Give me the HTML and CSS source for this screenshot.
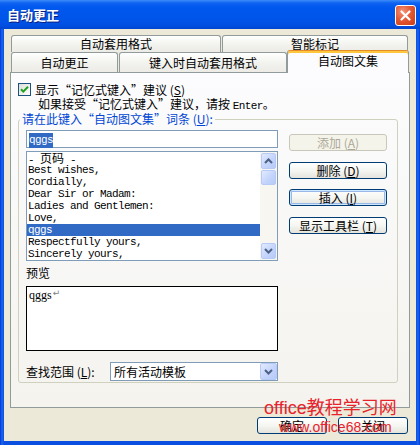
FILE: index.html
```html
<!DOCTYPE html>
<html lang="zh-CN">
<head>
<meta charset="utf-8">
<title>自动更正</title>
<link rel="stylesheet" href="styles.css">
</head>
<body>
<div class="window">
  <div class="titlebar">
    <span class="title">自动更正</span>
    <span class="close"><svg width="13" height="13" viewBox="0 0 13 13"><path d="M2.5 2.5L10.5 10.5M10.5 2.5L2.5 10.5" stroke="#fff" stroke-width="2.2" stroke-linecap="round"/></svg></span>
  </div>
  <div class="client">
    <div class="tabrow back">
      <div class="tab t1">自动套用格式</div>
      <div class="tab t2">智能标记</div>
    </div>
    <div class="tabrow front">
      <div class="tab t3">自动更正</div>
      <div class="tab t4">键入时自动套用格式</div>
      <div class="tab t5 active">自动图文集</div>
    </div>
    <div class="panel">
      <div class="check-row">
        <span class="checkbox"><svg width="11" height="11" viewBox="0 0 11 11"><path d="M2 5.2L4.3 7.6L9 2.8" fill="none" stroke="#21A121" stroke-width="2"/></svg></span>
        <span>显示<span class="ql">“</span>记忆式键入<span class="qr">”</span>建议 (<u>S</u>)</span>
      </div>
      <div class="hint">如果接受<span class="ql">“</span>记忆式键入<span class="qr">”</span>建议，请按 <span class="mono">Enter</span>。</div>
      <fieldset class="group">
        <legend>请在此键入<span class="ql">“</span>自动图文集<span class="qr">”</span>词条 (<u>U</u>):</legend>
        <div class="group-body">
          <div class="left">
            <div class="entry"><span class="sel">qggs</span></div>
            <div class="listbox">
              <ul class="items">
                <li>- <span class="cjk">页码</span> -</li>
                <li>Best wishes,</li>
                <li>Cordially,</li>
                <li>Dear Sir or Madam:</li>
                <li>Ladies and Gentlemen:</li>
                <li>Love,</li>
                <li class="selected">qggs</li>
                <li>Respectfully yours,</li>
                <li>Sincerely yours,</li>
              </ul>
              <div class="scrollbar">
                <div class="sb-btn"><svg width="9" height="6" viewBox="0 0 9 6"><path d="M1 5L4.5 1.5L8 5" fill="none" stroke="#4D6185" stroke-width="2"/></svg></div>
                <div class="sb-thumb"></div>
                <div class="sb-track"></div>
                <div class="sb-btn"><svg width="9" height="6" viewBox="0 0 9 6"><path d="M1 1L4.5 4.5L8 1" fill="none" stroke="#4D6185" stroke-width="2"/></svg></div>
              </div>
            </div>
            <div class="label">预览</div>
            <div class="preview">qggs<span class="para">↵</span></div>
            <div class="combo-row">
              <span class="combo-label">查找范围 (<u>L</u>):</span>
              <div class="combo">
                <span>所有活动模板</span>
                <span class="combo-btn"><svg width="9" height="6" viewBox="0 0 9 6"><path d="M1 1L4.5 4.5L8 1" fill="none" stroke="#4D6185" stroke-width="2"/></svg></span>
              </div>
            </div>
          </div>
          <div class="right">
            <div class="btn disabled b1">添加 (<u>A</u>)</div>
            <div class="btn b2">删除 (<u>D</u>)</div>
            <div class="btn focus b3">插入 (<u>I</u>)</div>
            <div class="btn b4">显示工具栏 (<u>T</u>)</div>
          </div>
        </div>
      </fieldset>
    </div>
    <div class="footer">
      <div class="btn fbtn">确定</div>
      <div class="btn fbtn">关闭</div>
    </div>
    <div class="watermark">
      <div class="wm1">office教程学习网</div>
      <div class="wm2">www.office68.com</div>
    </div>
  </div>
</div>
</body>
</html>
```

FILE: styles.css
```css
* { box-sizing: border-box; margin: 0; padding: 0; }
html, body { width: 420px; height: 445px; overflow: hidden; }
body {
  font-family: "Noto Sans CJK SC", "Liberation Sans", sans-serif;
  font-size: 12px;
  line-height: 12px;
  color: #000;
  background: #fff;
}
u { text-decoration: underline; text-underline-offset: 1px; }
.ql, .qr { display: inline-block; width: 12px; }
.ql { text-align: right; }
.qr { text-align: left; }

.window {
  width: 420px;
  height: 445px;
  display: flex;
  flex-direction: column;
  background: linear-gradient(90deg, #0831D9 0, #166AEE 2px, #0A4FE0 4px, #0A4FE0 416px, #166AEE 418px, #0831D9 420px);
}

.titlebar {
  height: 29px;
  flex: none;
  display: flex;
  align-items: center;
  justify-content: space-between;
  padding: 1px 4px 0 7px;
  background: linear-gradient(#3D8BF7 0, #0F63F2 3px, #0058EE 7px, #0055EA 18px, #0050E2 25px, #0045D0 29px);
}
.title {
  color: #fff;
  font-weight: bold;
  font-size: 13px;
  line-height: 14px;
  text-shadow: 1px 1px 0 #0A1E80;
}
.close {
  width: 21px;
  height: 21px;
  border: 1px solid #fff;
  border-radius: 3px;
  display: flex;
  align-items: center;
  justify-content: center;
  background: radial-gradient(circle at 35% 30%, #F3957A 0, #E35A36 45%, #C93A14 100%);
}

.client {
  flex: 1;
  margin: 0 4px 4px;
  background: #ECE9D8;
  padding: 6px 6px 0 6px;
  display: flex;
  flex-direction: column;
  position: relative;
}

.tabrow { display: flex; padding-left: 1px; }
.tabrow.back { height: 17px; }
.tabrow.front { height: 20px; align-items: flex-end; }
.tab {
  border: 1px solid #919B9C;
  border-bottom: none;
  border-radius: 3px 3px 0 0;
  background: linear-gradient(#FFFFFF, #F3F3EF 50%, #ECEBE6);
  text-align: center;
}
.back .tab { height: 17px; line-height: 16px; }
.front .tab { height: 20px; line-height: 19px; }
.t1 { width: 210px; }
.t2 { width: 186px; margin-left: 1px; }
.t3 { width: 107px; }
.t4 { width: 168px; margin-left: 1px; }
.tab.active {
  width: 122px;
  height: 23px;
  line-height: 20px;
  margin-bottom: -1px;
  background: #FCFCFE;
  border-top: 1px solid #E68B2C;
  box-shadow: inset 0 2px 0 #FFC73C;
  position: relative;
  z-index: 2;
}

.panel {
  width: 400px;
  height: 336px;
  flex: none;
  border: 1px solid #919B9C;
  background: linear-gradient(#FCFCFE, #F4F3EE);
}

.check-row {
  display: flex;
  align-items: center;
  height: 13px;
  line-height: 13px;
  margin: 10px 0 0 7px;
}
.checkbox {
  width: 13px;
  height: 13px;
  border: 1px solid #1C5180;
  background: linear-gradient(135deg, #DCDCD7, #FFFFFF);
  display: flex;
  align-items: center;
  justify-content: center;
  margin-right: 4px;
}

.hint { margin: 2px 0 0 27px; height: 12px; white-space: nowrap; }
.mono {
  font-family: "Liberation Mono", monospace;
  font-size: 11px;
  letter-spacing: -0.6px;
}

.group {
  width: 380px;
  margin: 3px 0 0 7px;
  border: 1px solid #D0D0BF;
  border-radius: 3px;
  padding: 5px 9px 1px 7px;
  min-width: 0;
}
.group legend {
  color: #0046D5;
  padding: 0 2px;
  margin-left: -6px;
  line-height: 12px;
  height: 12px;
  white-space: nowrap;
}
.group-body { display: flex; gap: 11px; }
.left { width: 252px; display: flex; flex-direction: column; }
.right { width: 98px; display: flex; flex-direction: column; }

.entry {
  height: 18px;
  border: 1px solid #7F9DB9;
  background: #fff;
  padding: 1px 2px 0;
}
.sel {
  display: inline-block;
  background: #316AC5;
  color: #fff;
  height: 15px;
  line-height: 15px;
  font-family: "Liberation Mono", monospace;
  font-size: 11px;
  letter-spacing: -0.6px;
}

.listbox {
  margin-top: 3px;
  height: 110px;
  border: 1px solid #7F9DB9;
  background: #fff;
  display: flex;
}
.items {
  list-style: none;
  flex: 1;
  overflow: hidden;
  font-family: "Liberation Mono", "Noto Sans CJK SC", monospace;
  font-size: 11px;
  letter-spacing: -0.6px;
}
.items li {
  height: 12px;
  line-height: 12px;
  padding-left: 1px;
  white-space: pre;
}
.items li.selected { background: #316AC5; color: #fff; }
.cjk { font-family: "Noto Sans CJK SC", sans-serif; font-size: 12px; letter-spacing: 0; line-height: 11px; }

.scrollbar {
  width: 17px;
  display: flex;
  flex-direction: column;
  background: #F7F6F1;
  padding: 1px 0;
}
.sb-btn, .sb-thumb {
  height: 16px;
  margin: 0 1px;
  border: 1px solid #B7CAF5;
  border-radius: 2px;
  background: linear-gradient(135deg, #E2EBFE, #C4D4FC 55%, #B6CBF8);
  display: flex;
  align-items: center;
  justify-content: center;
}
.sb-thumb { height: 15px; margin-top: 1px; }
.sb-track { flex: 1; }

.label { margin-top: 6px; height: 12px; }
.preview {
  margin-top: 7px;
  height: 65px;
  border: 1px solid #000;
  background: #fff;
  padding: 0 2px;
  font-family: "Liberation Serif", serif;
  font-size: 12px;
  line-height: 13px;
}
.para {
  color: #808080;
  font-family: "DejaVu Sans", sans-serif;
  font-size: 9px;
  vertical-align: 3px;
  margin-left: 1px;
}

.combo-row {
  margin-top: 11px;
  height: 19px;
  display: flex;
  align-items: center;
}
.combo-label { width: 84px; }
.combo {
  width: 168px;
  height: 19px;
  border: 1px solid #7F9DB9;
  background: #fff;
  display: flex;
  align-items: center;
  justify-content: space-between;
  padding-left: 3px;
}
.combo-btn {
  width: 17px;
  height: 17px;
  border: 1px solid #B7CAF5;
  border-radius: 2px;
  background: linear-gradient(135deg, #E2EBFE, #C4D4FC 55%, #B6CBF8);
  display: flex;
  align-items: center;
  justify-content: center;
}

.btn {
  height: 17px;
  border: 1px solid #003C74;
  border-radius: 3px;
  background: linear-gradient(#FFFFFF, #F4F4F0 55%, #E4E3DC);
  text-align: center;
  line-height: 15px;
}
.btn.disabled {
  border-color: #C9C7BA;
  background: #F5F4EA;
  color: #ACA899;
}
.btn.focus { box-shadow: inset 0 0 0 1px #CEE7FF, inset 0 0 0 2px #98B8EA; }
.b1 { margin-top: 4px; }
.b2 { margin-top: 11px; }
.b3 { margin-top: 10px; }
.b4 { margin-top: 11px; }

.footer {
  margin: 9px 2px 0 0;
  display: flex;
  justify-content: flex-end;
  gap: 11px;
}
.fbtn { width: 70px; }

.watermark {
  position: absolute;
  left: 260px;
  top: 370px;
  color: #E8232B;
  pointer-events: none;
}
.wm1 {
  font-family: "Liberation Sans", "Noto Sans CJK SC", sans-serif;
  font-size: 18px;
  line-height: 18px;
  white-space: nowrap;
}
.wm2 {
  font-family: "Liberation Sans", sans-serif;
  font-size: 14px;
  line-height: 14px;
  margin: 3px 0 0 15px;
  white-space: nowrap;
}
```
